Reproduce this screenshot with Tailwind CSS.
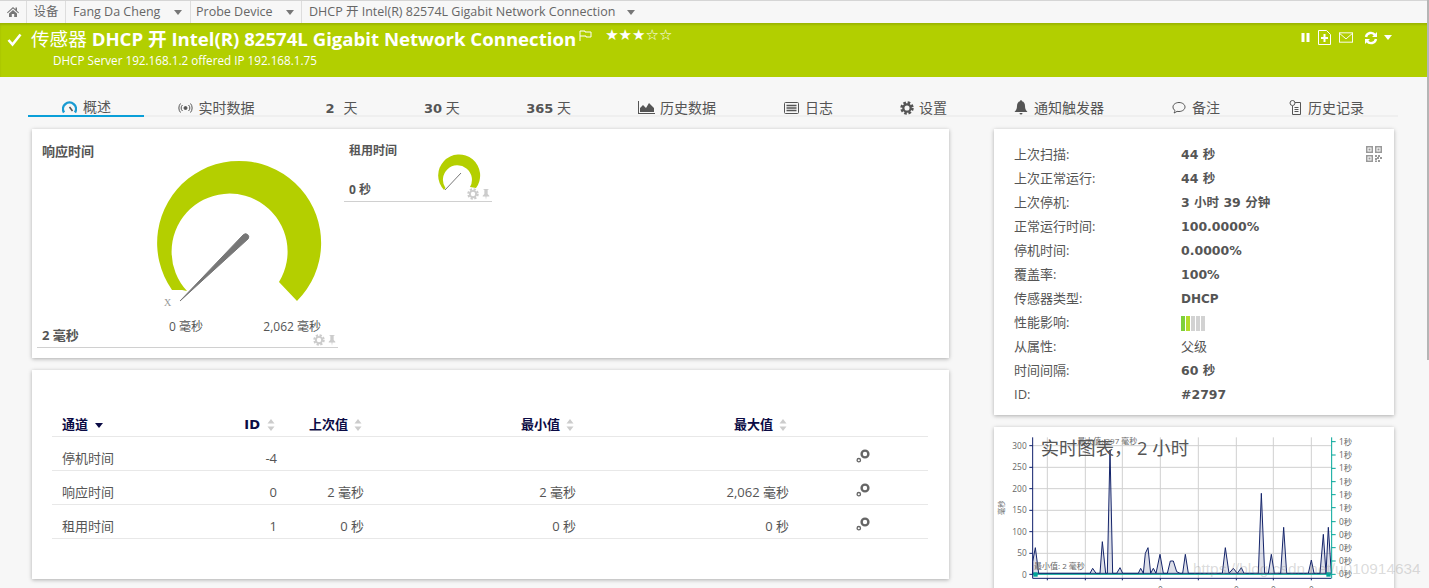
<!DOCTYPE html>
<html lang="zh">
<head>
<meta charset="UTF-8">
<title>传感器 DHCP</title>
<script src="https://cdn.jsdelivr.net/npm/@tailwindcss/browser@4"></script>
</head>
<body class="bg-[#f7f7f7] font-['Open_Sans','Noto_Sans_CJK_SC',sans-serif] text-[#555]">
<svg class="hidden">
  <symbol id="gear" viewBox="0 0 16 16">
    <circle cx="8" cy="8" r="6.2" fill="none" stroke="currentColor" stroke-width="3" stroke-dasharray="2.9 1.97"/>
    <circle cx="8" cy="8" r="4.2" fill="none" stroke="currentColor" stroke-width="2.6"/>
  </symbol>
  <symbol id="pin" viewBox="0 0 12 14">
    <path d="M3 1h6v1H8v5l2 2v1H6.6L6 14l-.6-4H2V9l2-2V2H3z" fill="currentColor"/>
  </symbol>
  <symbol id="gears" viewBox="0 0 14 14">
    <circle cx="9" cy="5" r="3.4" fill="none" stroke="currentColor" stroke-width="2.4"/>
    <circle cx="2.8" cy="11.2" r="1.7" fill="none" stroke="currentColor" stroke-width="1.3"/>
  </symbol>
  <symbol id="sort" viewBox="0 0 8 12">
    <path d="M4 0l3.5 4.5h-7zM4 12L.5 7.500h7z" fill="currentColor"/>
  </symbol>
</svg>

<div class="relative h-[588px] w-[1429px] overflow-hidden">
  <div class="absolute right-0 top-0 h-[360px] w-[2px] bg-[#b5b5b5]"></div>

  <!-- breadcrumb -->
  <nav class="flex h-[23px] items-center border-t border-[#d5d5d5] text-[12.500px] text-[#666]">
    <div class="flex h-full w-[27px] items-center justify-center border-r border-[#ddd]">
      <svg class="h-[12px] w-[12px] text-[#777]" viewBox="0 0 12 12" fill="currentColor"><path d="M6 1 0 6.500l.7.8L6 2.600l5.300 4.700.7-.8-2-1.800V1.500H8.500v1.700zM2 7.500 6 4l4 3.500V11H7.200V8H4.800v3H2z"/></svg>
    </div>
    <div class="flex h-full w-[39px] items-center justify-center border-r border-[#ddd]">设备</div>
    <div class="flex h-full w-[125px] items-center border-r border-[#ddd] pl-[7px]">Fang Da Cheng<span class="ml-[14px] h-0 w-0 border-x-[4px] border-t-[5px] border-x-transparent border-t-[#777]"></span></div>
    <div class="flex h-full w-[111px] items-center border-r border-[#ddd] pl-[5px]">Probe Device<span class="ml-[13px] h-0 w-0 border-x-[4px] border-t-[5px] border-x-transparent border-t-[#777]"></span></div>
    <div class="flex h-full items-center pl-[7px]">DHCP 开 Intel(R) 82574L Gigabit Network Connection<span class="ml-[12px] h-0 w-0 border-x-[4px] border-t-[5px] border-x-transparent border-t-[#777]"></span></div>
  </nav>

  <!-- sensor header -->
  <header class="flex h-[54px] justify-between bg-[#b2cf00] text-white shadow-[inset_0_2px_2px_rgba(0,0,0,0.12)]">
    <div>
      <div class="flex h-[32px] items-center pl-[7px]">
        <svg class="mr-[9px] h-[15px] w-[15px]" viewBox="0 0 15 15" fill="none" stroke="currentColor" stroke-width="2.600"><path d="M1.500 8l4 4.500 8-10"/></svg>
        <h1 class="text-[18.600px] leading-none">传感器 <b>DHCP 开 Intel(R) 82574L Gigabit Network Connection</b></h1>
        <svg class="mb-[8px] ml-[3px] h-[11px] w-[13px]" viewBox="0 0 13 11" fill="none" stroke="currentColor"><path d="M1 11V1h5v1h6v5H7V6H1"/></svg>
        <span class="mb-[8px] ml-[13px] font-['DejaVu_Sans'] text-[15px] leading-none">★★★☆☆</span>
      </div>
      <p class="pl-[53px] text-[11.700px] leading-[11px]">DHCP Server 192.168.1.2 offered IP 192.168.1.75</p>
    </div>
    <div class="flex items-start gap-[8px] pr-[37px] pt-[7px]">
      <svg class="mt-[1px] h-[13px] w-[9px]" viewBox="0 0 9 13" fill="currentColor"><rect x="0.500" y="2" width="3" height="9"/><rect x="5.500" y="2" width="3" height="9"/></svg>
      <svg class="h-[15px] w-[13px]" viewBox="0 0 13 15" fill="none" stroke="currentColor"><path d="M.5.500h8l4 4v10H.5z"/><path d="M6.500 4v8M3 8h7" stroke-width="2"/></svg>
      <svg class="mt-[1px] h-[13px] w-[14px]" viewBox="0 0 15 13" fill="none" stroke="currentColor"><rect x=".5" y="1.500" width="14" height="10"/><path d="M.5 2l7 6 7-6"/></svg>
      <svg class="ml-[3px] mt-[1px] h-[14px] w-[14px]" viewBox="0 0 14 14" fill="none" stroke="currentColor" stroke-width="2.400"><path d="M2 6a5 5 0 0 1 9-2M12 8a5 5 0 0 1-9 2"/><path d="M13 1v5H8zM1 13V8h5z" fill="currentColor" stroke="none"/></svg>
      <span class="-ml-[2px] mt-[5px] h-0 w-0 border-x-[4px] border-t-[5px] border-x-transparent border-t-white"></span>
    </div>
  </header>

  <!-- tabs -->
  <div class="ml-[28px] mt-[21px] flex h-[19px] w-[1370px] items-start border-b-2 border-[#efefef] text-[14px] leading-[19px]">
    <a class="-mb-[2px] flex h-[19px] items-center gap-[6px] border-b-2 border-[#0a9fd8] pl-[34px] pr-[33px]">
      <svg class="h-[14px] w-[15px]" viewBox="0 0 15 14" fill="none"><path d="M2 12.500a6.500 6.500 0 1 1 11 0" stroke="#1a9bd2" stroke-width="2.400"/><path d="M7.500 7l3 4" stroke="#555" stroke-width="1.500"/></svg>概述</a>
    <a class="flex items-center gap-[6px] px-[33.500px]">
      <svg class="h-[10px] w-[15px]" viewBox="0 0 15 10" fill="none" stroke="#555"><circle cx="7.500" cy="5" r="1.500" fill="#555"/><path d="M4.500 2a4 4 0 0 0 0 6M10.500 2a4 4 0 0 1 0 6M2.500.5a7 7 0 0 0 0 9M12.500.5a7 7 0 0 1 0 9"/></svg>实时数据</a>
    <a class="ml-[4px] px-[33.500px]"><b class="font-['DejaVu_Sans'] text-[13px]">2</b><span class="ml-[9px]">天</span></a>
    <a class="px-[33px]"><b class="font-['DejaVu_Sans'] text-[13px]">30</b> 天</a>
    <a class="px-[33.500px]"><b class="font-['DejaVu_Sans'] text-[13px]">365</b> 天</a>
    <a class="flex items-center gap-[5px] px-[33.500px]">
      <svg class="h-[13px] w-[17px]" viewBox="0 0 17 13" fill="#555"><path d="M0 0h1v12h16v1H0z"/><path d="M2 11V7l3-3 3 3 3-5 5 5v4z"/></svg>历史数据</a>
    <a class="ml-[1px] flex items-center gap-[6px] px-[33.500px]">
      <svg class="h-[12px] w-[15px]" viewBox="0 0 15 12" fill="none" stroke="#555"><rect x=".5" y=".5" width="14" height="11" rx="1"/><path d="M2.500 3.500h10M2.500 6h10M2.500 8.500h10" stroke-width="1.300"/></svg>日志</a>
    <a class="flex items-center gap-[5px] px-[33.500px]">
      <svg class="h-[14px] w-[14px] text-[#555]"><use href="#gear"/></svg>设置</a>
    <a class="flex items-center gap-[6px] px-[33.500px]">
      <svg class="h-[15px] w-[14px]" viewBox="0 0 14 15" fill="#555"><path d="M7 0a1.200 1.200 0 0 1 1 1.200C10 1.700 11 3.500 11 6c0 3 1 4.500 2.500 6H.5C2 10.500 3 9 3 6c0-2.500 1-4.300 3-4.800A1.200 1.200 0 0 1 7 0zM5.500 13h3a1.500 1.500 0 0 1-3 0z"/></svg>通知触发器</a>
    <a class="ml-[1px] flex items-center gap-[6px] px-[33.500px]">
      <svg class="h-[14px] w-[14px]" viewBox="0 0 14 14" fill="none" stroke="#555"><path d="M7 1.500c3.300 0 6 2 6 4.500s-2.700 4.500-6 4.500c-.7 0-1.300 0-2-.2-.8.8-2 1.500-3 1.700.6-.8 1-1.600 1-2.500-1.300-.8-2-2-2-3.500 0-2.500 2.700-4.500 6-4.500z"/></svg>备注</a>
    <a class="ml-[2px] flex items-center gap-[6px] px-[33.500px]">
      <svg class="h-[15px] w-[13px]" viewBox="0 0 13 15" fill="none" stroke="#555"><circle cx="3.500" cy="3" r="2.500"/><path d="M6 2.500h5.500v12h-8V6M5.500 7.500h4M5.500 9.500h4M5.500 11.500h4"/></svg>历史记录</a>
  </div>

  <!-- main -->
  <main class="ml-[32px] mt-[12px] flex items-start gap-[45px]">
    <div class="flex w-[917px] flex-col gap-[12px]">
      <!-- gauges -->
      <section class="flex h-[229px] items-start bg-white pl-[5px] shadow-[0_1px_4px_rgba(0,0,0,0.3)]">
        <div class="relative flex h-[219px] w-[301px] flex-col justify-between border-b border-[#d0d0d0] pl-[5px] pt-[14px]">
          <h3 class="text-[13px] font-bold leading-[16px]">响应时间</h3>
          <svg class="absolute left-[120px] top-[30px] h-[150px] w-[170px]" viewBox="157 159 170 150">
            <path d="M180 301 187 291 182 290H172A82 82 0 1 1 297 301L279 282A58 58 0 1 0 187 291Z" fill="#b4cf00"/>
            <path d="M180 301 243.500 234.500A3.200 3.200 0 0 1 248 239Z" fill="#777" stroke="#777" stroke-linejoin="round"/>
            <text x="164" y="306" font-size="10" fill="#999" font-family="Liberation Serif">X</text>
          </svg>
          <div class="absolute left-[132px] top-[190px] text-[12px] leading-[16px]">0 毫秒</div>
          <div class="absolute right-[17px] top-[190px] text-[12px] leading-[16px]">2,062 毫秒</div>
          <div class="absolute bottom-[1px] right-[1px] flex items-center gap-[2px] text-[#ccc]">
            <svg class="h-[12px] w-[12px]"><use href="#gear"/></svg>
            <svg class="h-[12px] w-[10px]"><use href="#pin"/></svg>
          </div>
          <div class="pb-[3px] text-[13px] font-bold leading-[18px]">2 毫秒</div>
        </div>
        <div class="relative ml-[6px] flex h-[73px] w-[148px] flex-col justify-between border-b border-[#d0d0d0] pl-[5px] pt-[14px]">
          <h3 class="text-[12px] font-bold leading-[16px]">租用时间</h3>
          <svg class="absolute left-[92px] top-[23px] h-[40px] w-[46px]" viewBox="436 152 46 40">
            <path d="M444 190A21 21 0 1 1 476 188L470 187A14.500 14.500 0 1 0 445.500 188Z" fill="#b4cf00"/>
            <path d="M445 190 461 173" stroke="#777" stroke-width="1"/>
          </svg>
          <div class="absolute bottom-[1px] right-[1px] flex items-center gap-[2px] text-[#ccc]">
            <svg class="h-[12px] w-[12px]"><use href="#gear"/></svg>
            <svg class="h-[12px] w-[10px]"><use href="#pin"/></svg>
          </div>
          <div class="pb-[2px] text-[12px] font-bold leading-[18px]">0 秒</div>
        </div>
      </section>

      <!-- channels -->
      <section class="h-[209px] bg-white px-[20px] pt-[43px] shadow-[0_1px_4px_rgba(0,0,0,0.3)]">
        <table class="w-[876px] table-fixed text-[13px]">
          <colgroup><col class="w-[178px]"><col class="w-[57px]"><col class="w-[87px]"><col class="w-[212px]"><col class="w-[213px]"><col></colgroup>
          <thead class="text-[#0b0b45]">
            <tr class="h-[23px] border-b border-[#e8e8e8]">
              <th class="pl-[10px] text-left font-bold">通道<span class="mb-[1px] ml-[7px] inline-block h-0 w-0 border-x-[4px] border-t-[5px] border-x-transparent border-t-[#0b0b45]"></span></th>
              <th class="pr-[12px] text-right font-['DejaVu_Sans'] font-bold">ID<svg class="ml-[7px] inline h-[12px] w-[8px] text-[#ccc]"><use href="#sort"/></svg></th>
              <th class="pr-[12px] text-right font-bold">上次值<svg class="ml-[6px] inline h-[12px] w-[8px] text-[#ccc]"><use href="#sort"/></svg></th>
              <th class="pr-[12px] text-right font-bold">最小值<svg class="ml-[6px] inline h-[12px] w-[8px] text-[#ccc]"><use href="#sort"/></svg></th>
              <th class="pr-[12px] text-right font-bold">最大值<svg class="ml-[6px] inline h-[12px] w-[8px] text-[#ccc]"><use href="#sort"/></svg></th>
              <th></th>
            </tr>
          </thead>
          <tbody>
            <tr class="h-[34px] border-b border-[#e8e8e8]">
              <td class="pl-[10px] pt-[11px]">停机时间</td><td class="pr-[10px] pt-[11px] text-right">-4</td><td></td><td></td><td></td>
              <td class="pl-[57px] pt-[6px]"><svg class="h-[14px] w-[14px] text-[#666]"><use href="#gears"/></svg></td>
            </tr>
            <tr class="h-[34px] border-b border-[#e8e8e8]">
              <td class="pl-[10px] pt-[11px]">响应时间</td><td class="pr-[10px] pt-[11px] text-right">0</td><td class="pr-[10px] pt-[11px] text-right">2 毫秒</td><td class="pr-[10px] pt-[11px] text-right">2 毫秒</td><td class="pr-[10px] pt-[11px] text-right">2,062 毫秒</td>
              <td class="pl-[57px] pt-[6px]"><svg class="h-[14px] w-[14px] text-[#666]"><use href="#gears"/></svg></td>
            </tr>
            <tr class="h-[34px] border-b border-[#e8e8e8]">
              <td class="pl-[10px] pt-[11px]">租用时间</td><td class="pr-[10px] pt-[11px] text-right">1</td><td class="pr-[10px] pt-[11px] text-right">0 秒</td><td class="pr-[10px] pt-[11px] text-right">0 秒</td><td class="pr-[10px] pt-[11px] text-right">0 秒</td>
              <td class="pl-[57px] pt-[6px]"><svg class="h-[14px] w-[14px] text-[#666]"><use href="#gears"/></svg></td>
            </tr>
          </tbody>
        </table>
      </section>
    </div>

    <aside class="flex w-[400px] flex-col gap-[12px]">
      <!-- details -->
      <section class="relative h-[286px] bg-white pl-[20px] pt-[14px] text-[13px] shadow-[0_1px_4px_rgba(0,0,0,0.3)]">
        <svg class="absolute right-[12px] top-[17px] h-[16px] w-[16px] text-[#999]" viewBox="0 0 16 16" fill="currentColor">
          <path fill-rule="evenodd" d="M0 0h7v7H0zM1.500 1.500v4h4v-4zM9 0h7v7H9zM10.500 1.500v4h4v-4zM0 9h7v7H0zM1.500 10.500v4h4v-4z"/>
          <path d="M2.500 2.500h2v2h-2zM11.500 2.500h2v2h-2zM2.500 11.500h2v2h-2zM9 9h2v2H9zM12 9h2v2h-2zM14 11h2v2h-2zM9 12h2v2H9zM11 11h2v2h-2zM12 14h2v2h-2zM9 14.500h2V16H9z"/>
        </svg>
        <dl class="grid grid-cols-[167px_1fr] auto-rows-[24px] items-center">
          <dt>上次扫描:</dt><dd class="font-['DejaVu_Sans','Noto_Sans_CJK_SC',sans-serif] text-[12.500px] font-bold">44 秒</dd>
          <dt>上次正常运行:</dt><dd class="font-['DejaVu_Sans','Noto_Sans_CJK_SC',sans-serif] text-[12.500px] font-bold">44 秒</dd>
          <dt>上次停机:</dt><dd class="font-['DejaVu_Sans','Noto_Sans_CJK_SC',sans-serif] text-[12.500px] font-bold">3 小时 39 分钟</dd>
          <dt>正常运行时间:</dt><dd class="font-['DejaVu_Sans','Noto_Sans_CJK_SC',sans-serif] text-[12.500px] font-bold">100.0000%</dd>
          <dt>停机时间:</dt><dd class="font-['DejaVu_Sans','Noto_Sans_CJK_SC',sans-serif] text-[12.500px] font-bold">0.0000%</dd>
          <dt>覆盖率:</dt><dd class="font-['DejaVu_Sans','Noto_Sans_CJK_SC',sans-serif] text-[12.500px] font-bold">100%</dd>
          <dt>传感器类型:</dt><dd class="font-['DejaVu_Sans','Noto_Sans_CJK_SC',sans-serif] text-[12px] font-bold">DHCP</dd>
          <dt>性能影响:</dt>
          <dd class="flex gap-[1px]">
            <span class="h-[15px] w-[4px] bg-[#7ed03a]"></span><span class="h-[15px] w-[4px] bg-[#b4dc2a]"></span><span class="h-[15px] w-[4px] bg-[#d2d2d2]"></span><span class="h-[15px] w-[4px] bg-[#d2d2d2]"></span><span class="h-[15px] w-[4px] bg-[#d2d2d2]"></span>
          </dd>
          <dt>从属性:</dt><dd>父级</dd>
          <dt>时间间隔:</dt><dd class="font-['DejaVu_Sans','Noto_Sans_CJK_SC',sans-serif] text-[12.500px] font-bold">60 秒</dd>
          <dt>ID:</dt><dd class="font-['DejaVu_Sans','Noto_Sans_CJK_SC',sans-serif] text-[12.500px] font-bold">#2797</dd>
        </dl>
      </section>

      <!-- live chart -->
      <section class="relative h-[170px] bg-white shadow-[0_1px_4px_rgba(0,0,0,0.3)]">
        <svg class="absolute left-[-4px] top-[-2px] h-[163px] w-[439px] overflow-hidden font-['Open_Sans','Noto_Sans_CJK_SC',sans-serif]" viewBox="0 0 1317 489">
          <g stroke="#d0d0d0" stroke-width="3">
            <path d="M128 62H1024M128 127H1024M128 191H1024M128 256H1024M128 320H1024M128 385H1024"/>
            <path d="M172 37V460M286 37V460M397 37V460M511 37V460M625 37V460M739 37V460M850 37V460M964 37V460"/>
          </g>
          <path d="M128 445V410L136 368 146 445H300L308 430 318 445H330L337 350 347 445H352L360 75 368 445H380L390 428 398 445H445L452 430 460 445 466 385 474 368 482 445 490 430 498 445 510 388 520 445H532L541 408H550L560 440 570 445H578L586 388 595 445H697L706 368 717 445 730 430 742 445 754 428 762 445H805L814 205 824 445H835L844 388 853 445H872L881 307 890 445H955L964 405 972 445H990L1000 328 1008 445 1015 307 1024 445Z" fill="#1a2a6c" fill-opacity="0.15" stroke="#14246a" stroke-width="3"/>
          <path d="M128 448H1024" stroke="#00a598" stroke-width="3"/>
          <rect x="130" y="442" width="13" height="13" fill="#00a598"/>
          <rect x="1009" y="442" width="13" height="13" fill="#00a598"/>
          <path d="M128 37V460H1024" fill="none" stroke="#0f1f6b" stroke-width="3"/>
          <path d="M118 62h10M118 127h10M118 191h10M118 256h10M118 320h10M118 385h10M118 448h10M172 460v6M286 460v6M397 460v6M511 460v6M625 460v6M739 460v6M850 460v6M964 460v6" stroke="#0f1f6b" stroke-width="3"/>
          <path d="M1025 37V460" stroke="#00a598" stroke-width="3"/>
          <path d="M1025 50h12M1025 90h12M1025 130h12M1025 170h12M1025 209h12M1025 248h12M1025 290h12M1025 329h12M1025 368h12M1025 408h12M1025 448h12" stroke="#00a598" stroke-width="3"/>
          <g font-size="25" fill="#666" text-anchor="end">
            <text x="110" y="71">300</text><text x="110" y="136">250</text><text x="110" y="200">200</text><text x="110" y="265">150</text><text x="110" y="329">100</text><text x="110" y="394">50</text><text x="110" y="458">0</text>
          </g>
          <g font-size="25" fill="#666">
            <text x="1047" y="59">1秒</text><text x="1047" y="99">1秒</text><text x="1047" y="139">1秒</text><text x="1047" y="179">1秒</text><text x="1047" y="218">1秒</text><text x="1047" y="257">1秒</text><text x="1047" y="299">0秒</text><text x="1047" y="338">0秒</text><text x="1047" y="377">0秒</text><text x="1047" y="417">0秒</text><text x="1047" y="457">0秒</text>
          </g>
          <text transform="translate(43 248) rotate(-90)" font-size="22" fill="#666" text-anchor="middle">毫秒</text>
          <text x="262" y="58" font-size="24" fill="#666">最大值: 297 毫秒</text>
          <text x="132" y="431" font-size="24" fill="#666">最小值: 2 毫秒</text>
          <text x="152" y="90" font-size="55" fill="#555">实时图表， 2 小时</text>
          <g font-size="25" fill="#666" text-anchor="middle">
            <text x="511" y="503">0</text><text x="739" y="503">0</text><text x="850" y="503">0</text><text x="964" y="503">0</text>
          </g>
        </svg>
      </section>
    </aside>
  </main>

  <div class="absolute left-[1193px] top-[559px] font-['Liberation_Sans'] text-[15.400px] leading-[20px] text-[#888]/30">https://blog.csdn.net/u010914634</div>
</div>
</body>
</html>
